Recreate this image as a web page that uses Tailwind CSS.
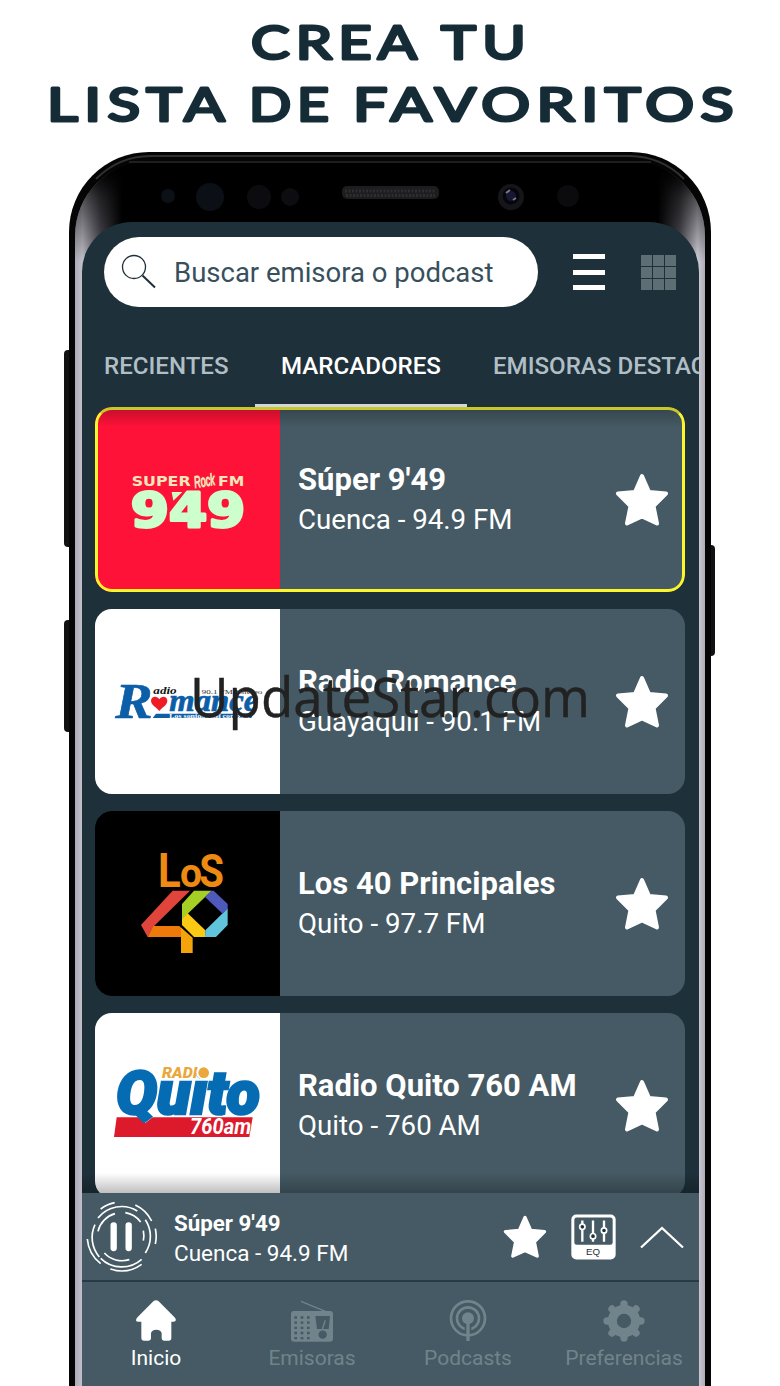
<!DOCTYPE html>
<html lang="es">
<head>
    <meta charset="UTF-8">
    <meta name="viewport" content="width=device-width, initial-scale=1.0">
    <title>Crea tu lista de favoritos</title>
    <script src="https://cdn.jsdelivr.net/npm/@tailwindcss/browser@4"></script>
</head>
<body class="bg-white font-['Roboto',sans-serif] overflow-hidden">
    <div class="relative w-[780px] h-[1386px] overflow-hidden">
        <!-- Heading -->
        <h1 class="h-[152px]">
            <svg class="block" width="780" height="152" font-family="Lato" font-weight="400" font-size="47" fill="#152c37" stroke="#152c37" stroke-width="3" stroke-linejoin="round" letter-spacing="5">
                <text x="251" y="58.500" textLength="172" lengthAdjust="spacingAndGlyphs">CREA</text>
                <text x="441" y="58.500" textLength="91" lengthAdjust="spacingAndGlyphs">TU</text>
                <text x="47" y="120.500" textLength="184" lengthAdjust="spacingAndGlyphs">LISTA</text>
                <text x="249" y="120.500" textLength="86" lengthAdjust="spacingAndGlyphs">DE</text>
                <text x="353" y="120.500" textLength="387" lengthAdjust="spacingAndGlyphs">FAVORITOS</text>
            </svg>
        </h1>

        <!-- Phone -->
        <div class="relative ml-[69px] w-[642px] h-[1234px]">
            <div class="absolute -left-[5px] top-[198px] w-2 h-[197px] rounded-l bg-[#111] border-r-2 border-[#444]"></div>
            <div class="absolute -left-[5px] top-[468px] w-2 h-[112px] rounded-l bg-[#111] border-r-2 border-[#444]"></div>
            <div class="absolute -right-[4px] top-[393px] w-2 h-[111px] rounded-r bg-[#111] border-l-2 border-[#333]"></div>

            <!-- Chassis, sensors, speaker, camera -->
            <svg class="absolute left-0 top-0" width="642" height="1234">
                <defs>
                    <linearGradient id="sides" gradientUnits="userSpaceOnUse" x1="6" y1="0" x2="636" y2="0">
                        <stop offset="0" stop-color="#aeacb6"/>
                        <stop offset=".012" stop-color="#c2c0ca"/>
                        <stop offset=".04" stop-color="#55535c"/>
                        <stop offset=".075" stop-color="#000"/>
                        <stop offset=".925" stop-color="#000"/>
                        <stop offset=".96" stop-color="#55535c"/>
                        <stop offset=".988" stop-color="#cfcdd7"/>
                        <stop offset="1" stop-color="#aeacb6"/>
                    </linearGradient>
                    <linearGradient id="shade" gradientUnits="userSpaceOnUse" x1="0" y1="18" x2="0" y2="110">
                        <stop offset="0" stop-color="#000"/>
                        <stop offset=".3" stop-color="#000" stop-opacity=".6"/>
                        <stop offset="1" stop-color="#000" stop-opacity="0"/>
                    </linearGradient>
                </defs>
                <path d="M0 1234V80A80 80 0 0 1 80 0H562A80 80 0 0 1 642 80V1234Z" fill="#050505"/>
                <path d="M6 1234V84A75 75 0 0 1 81 9H561A75 75 0 0 1 636 84V1234Z" fill="url(#sides)"/>
                <path d="M6 110V84A75 75 0 0 1 81 9H561A75 75 0 0 1 636 84V110Z" fill="url(#shade)"/>
                <path d="M27 27A78 78 0 0 1 81.500 4H560.500A78 78 0 0 1 615 27" fill="none" stroke="#303030" stroke-width="2"/>
                <path d="M60 10H582" stroke="#292929" stroke-width="1.500"/>
                <circle cx="99" cy="44" r="7" fill="#0c1117"/>
                <circle cx="141" cy="45" r="14" fill="#0a1016"/>
                <circle cx="190" cy="45" r="12" fill="#0c0c10"/>
                <circle cx="221" cy="45" r="9" fill="#0d0d11"/>
                <rect x="273" y="34" width="97" height="13" rx="5" fill="#1d1d1f"/>
                <path d="M276 39H367M277 43.500H366" stroke="#2e2e30" stroke-width="3" stroke-dasharray="2 1.500"/>
                <circle cx="442" cy="45" r="13" fill="#16161a"/>
                <circle cx="442" cy="44" r="8.500" fill="#05050c"/>
                <circle cx="442" cy="44" r="5" fill="#171733"/>
                <path d="M437 41l4-3M444 48l3-2" stroke="#777b88" stroke-width="2"/>
                <circle cx="499" cy="44" r="11" fill="#0b0b0d"/>
            </svg>

            <!-- Screen -->
            <div class="relative ml-[13px] top-[70px] w-[617px] h-[1164px] rounded-t-[50px] bg-[#1e3039] overflow-hidden flex flex-col">
                <div class="mt-[15px] ml-[22px] h-[70px] shrink-0 flex items-center">
                    <div class="w-[434px] h-full rounded-full bg-white flex items-center pl-[17px]">
                        <svg width="36" height="36" fill="none" stroke="#1e3039">
                            <circle cx="13" cy="13" r="11.500" stroke-width="1.300"/>
                            <path d="M21.500 21.500L34 33.500" stroke-width="2"/>
                        </svg>
                        <span class="ml-[17px] pt-[2px] text-[27.5px] text-[#37505c] whitespace-nowrap">Buscar emisora o podcast</span>
                    </div>
                    <div class="ml-[35px] w-8 h-9 flex flex-col justify-between">
                        <div class="h-[5px] bg-white"></div>
                        <div class="h-[5px] bg-white"></div>
                        <div class="h-[5px] bg-white"></div>
                    </div>
                    <div class="ml-[36px] w-[35px] h-[35px] grid grid-cols-3 gap-px">
                        <div class="bg-[#5d6e74]"></div><div class="bg-[#5d6e74]"></div><div class="bg-[#5d6e74]"></div>
                        <div class="bg-[#5d6e74]"></div><div class="bg-[#5d6e74]"></div><div class="bg-[#5d6e74]"></div>
                        <div class="bg-[#5d6e74]"></div><div class="bg-[#5d6e74]"></div><div class="bg-[#5d6e74]"></div>
                    </div>
                </div>

                <!-- Tabs -->
                <div class="h-[100px] shrink-0 flex text-[24.1px] font-medium whitespace-nowrap text-[#b0bec5]">
                    <div class="w-[173px] shrink-0 pl-[22px] pt-[19px] flex items-center">RECIENTES</div>
                    <div class="w-[212px] shrink-0 pt-[22px] border-b-[3px] border-[#cfd8dc] flex items-center justify-center text-white">MARCADORES</div>
                    <div class="shrink-0 pl-[26px] pt-[19px] flex items-center">EMISORAS DESTACADAS</div>
                </div>

                <!-- Stations -->
                <div class="relative flex-1 min-h-0 overflow-hidden pl-[13px] flex flex-col gap-[17px] text-white whitespace-nowrap">
                    <div class="relative w-[590px] h-[185px] shrink-0 rounded-[17px] bg-[#455a64] overflow-hidden flex items-center">
                        <svg width="185" height="185" viewBox="30 231 555 555">
                            <rect x="30" y="231" width="555" height="555" fill="#ff1238"/>
                            <g font-family="DejaVu Sans" font-weight="700" fill="#f2e6bd">
                                <text x="140" y="467" font-size="40" textLength="177" lengthAdjust="spacingAndGlyphs">SUPER</text>
                                <text x="330" y="474" font-size="50" font-family="Liberation Sans Narrow, Liberation Sans" font-style="italic" font-weight="400" textLength="62" lengthAdjust="spacingAndGlyphs" transform="rotate(-9 330 474)" stroke="#f2e6bd" stroke-width="3">Rock</text>
                                <text x="399" y="467" font-size="40" textLength="79" lengthAdjust="spacingAndGlyphs">FM</text>
                                <text x="137" y="590" font-size="142" fill="#ccffcb" stroke="#ccffcb" stroke-width="9" stroke-linejoin="round" textLength="344" lengthAdjust="spacingAndGlyphs">949</text>
                            </g>
                            <path d="M260 486h32l-27 26z" fill="#ccffcb"/>
                        </svg>
                        <div class="ml-[18px] flex-1">
                            <div class="text-[31px] leading-[40px] font-bold">Súper 9'49</div>
                            <div class="text-[27.7px] leading-[40px]">Cuenca - 94.9 FM</div>
                        </div>
                        <svg class="mr-[16px]" width="54" height="54" viewBox="0 0 54 54"><path d="M27 3L34 19L51 20.500L38.500 33L42 50.500L27 43.500L12 50.500L15.500 33L3 20.500L20 19Z" fill="#fff" stroke="#fff" stroke-width="4" stroke-linejoin="round"/></svg>
                        <div class="absolute inset-x-0 top-0 h-5 bg-gradient-to-b from-black/25 to-transparent"></div>
                        <div class="absolute inset-0 rounded-[17px] border-[3.5px] border-[#fbf52a] border-t-[#c8c72c]"></div>
                    </div>

                    <div class="w-[590px] h-[185px] shrink-0 rounded-[17px] bg-[#455a64] overflow-hidden flex items-center">
                        <svg width="185" height="185" viewBox="15 27 555 555">
                            <rect x="15" y="27" width="555" height="555" fill="#fff"/>
                            <g font-family="Liberation Serif" font-weight="700" font-style="italic" fill="#0c5ea8">
                                <text x="76" y="353" font-size="152" textLength="112" lengthAdjust="spacingAndGlyphs" stroke="#0c5ea8" stroke-width="2">R</text>
                                <text x="190" y="282" font-size="32" fill="#111" textLength="70" lengthAdjust="spacingAndGlyphs">adio</text>
                                <text x="238" y="333" font-size="92" textLength="267" lengthAdjust="spacingAndGlyphs" stroke="#0c5ea8" stroke-width="2">mance</text>
                                <text x="335" y="283" font-size="19" fill="#333" font-style="normal" font-weight="400" textLength="182" lengthAdjust="spacingAndGlyphs">90.1 FM Estéreo</text>
                                <path d="M198 341H490L484 354H188Z"/>
                                <text x="238" y="353" font-size="18" fill="#fff" font-style="normal" textLength="240" lengthAdjust="spacingAndGlyphs">Los sonidos del corazón</text>
                            </g>
                            <path d="M208 333C200 322 183 315 183 302C183 288 202 286 208 298C214 286 232 288 232 302C232 315 216 322 208 333Z" fill="#ee1c25"/>
                        </svg>
                        <div class="ml-[18px] flex-1">
                            <div class="text-[31px] leading-[40px] font-bold">Radio Romance</div>
                            <div class="text-[27.7px] leading-[40px]">Guayaquil - 90.1 FM</div>
                        </div>
                        <svg class="mr-[16px]" width="54" height="54" viewBox="0 0 54 54"><path d="M27 3L34 19L51 20.500L38.500 33L42 50.500L27 43.500L12 50.500L15.500 33L3 20.500L20 19Z" fill="#fff" stroke="#fff" stroke-width="4" stroke-linejoin="round"/></svg>
                    </div>

                    <div class="w-[590px] h-[185px] shrink-0 rounded-[17px] bg-[#455a64] overflow-hidden flex items-center">
                        <svg width="185" height="185" viewBox="15 33 555 555">
                            <rect x="15" y="33" width="555" height="555" fill="#000"/>
                            <g font-family="Roboto" font-weight="700" fill="#ee8a12">
                                <text x="204" y="262" font-size="143" textLength="68" lengthAdjust="spacingAndGlyphs">L</text>
                                <text x="270" y="261" font-size="124" textLength="66" lengthAdjust="spacingAndGlyphs">o</text>
                                <text x="328" y="261" font-size="138" textLength="74" lengthAdjust="spacingAndGlyphs">S</text>
                            </g>
                            <path d="M248 272H300L190 380L173 411L153 375Z" fill="#e0443a"/>
                            <path d="M190 378H268L273 384V411H173Z" fill="#ee7a0c"/>
                            <path d="M268 378L308 413V459H273V384Z" fill="#f5a30c"/>
                            <path d="M312 272H365L276 358V312Z" fill="#a5cf25"/>
                            <path d="M276 356L293 340L346 391L345 411H312L276 375Z" fill="#fbc814"/>
                            <path d="M413 325V375L378 411H345L346 391L398 340Z" fill="#5fc4dc"/>
                            <path d="M345 291L364 272H371L413 312V325L398 341Z" fill="#4f58bb"/>
                        </svg>
                        <div class="ml-[18px] flex-1">
                            <div class="text-[31px] leading-[40px] font-bold">Los 40 Principales</div>
                            <div class="text-[27.7px] leading-[40px]">Quito - 97.7 FM</div>
                        </div>
                        <svg class="mr-[16px]" width="54" height="54" viewBox="0 0 54 54"><path d="M27 3L34 19L51 20.500L38.500 33L42 50.500L27 43.500L12 50.500L15.500 33L3 20.500L20 19Z" fill="#fff" stroke="#fff" stroke-width="4" stroke-linejoin="round"/></svg>
                    </div>

                    <div class="w-[590px] h-[185px] shrink-0 rounded-[17px] bg-[#455a64] overflow-hidden flex items-center">
                        <svg width="185" height="185" viewBox="15 24 555 555">
                            <rect x="15" y="24" width="555" height="555" fill="#fff"/>
                            <path d="M80 337H488L478 396H72Z" fill="#dc1a2b"/>
                            <path d="M145 335L166 354L190 335Z" fill="#fff"/>
                            <g font-family="Roboto" font-weight="900" font-style="italic">
                                <text x="78" y="328" font-size="182" fill="#056cb4" stroke="#056cb4" stroke-width="8" textLength="432" lengthAdjust="spacingAndGlyphs">Quito</text>
                                <text x="216" y="220" font-size="42" fill="#eba63c" textLength="106" lengthAdjust="spacingAndGlyphs">RADI</text>
                                <text x="300" y="387" font-size="66" font-weight="700" fill="#fff" textLength="184" lengthAdjust="spacingAndGlyphs">760am</text>
                            </g>
                            <circle cx="341" cy="203" r="22" fill="#fff"/>
                            <circle cx="341" cy="203" r="16" fill="#eba63c"/>
                        </svg>
                        <div class="ml-[18px] flex-1">
                            <div class="text-[31px] leading-[40px] font-bold">Radio Quito 760 AM</div>
                            <div class="text-[27.7px] leading-[40px]">Quito - 760 AM</div>
                        </div>
                        <svg class="mr-[16px]" width="54" height="54" viewBox="0 0 54 54"><path d="M27 3L34 19L51 20.500L38.500 33L42 50.500L27 43.500L12 50.500L15.500 33L3 20.500L20 19Z" fill="#fff" stroke="#fff" stroke-width="4" stroke-linejoin="round"/></svg>
                    </div>
                    <div class="absolute inset-x-0 bottom-0 h-5 bg-gradient-to-t from-black/25 to-transparent"></div>
                </div>

                <!-- Player -->
                <div class="h-[89px] shrink-0 bg-[#455a64] border-b-2 border-[#263b45] flex items-center pl-[4px] text-white whitespace-nowrap">
                    <svg width="72" height="72" viewBox="48 49 216 216" fill="none" stroke="#fff" stroke-width="5">
                        <path d="M131 122V190M176 122V190" stroke-width="19" stroke-linecap="round"/>
                        <path d="M84 140A73 73 0 0 1 135 87M166 84A73 73 0 0 1 212 112M220 138A73 73 0 0 1 220 168M178 225A73 73 0 0 1 103 205"/>
                        <path d="M84 100A90 90 0 0 1 202 79M226 105A90 90 0 0 1 226 205M215 224A90 90 0 0 1 92 221M88 217A90 90 0 0 1 75 120"/>
                        <path d="M92 73A104 104 0 0 1 134 54M196 61A104 104 0 0 1 245 109M256 132A104 104 0 0 1 256 178M215 239A104 104 0 0 1 121 253M92 237A104 104 0 0 1 52 163"/>
                    </svg>
                    <div class="ml-[16px] pt-[3px] flex-1 text-[22.5px] leading-[30px]">
                        <div class="font-bold text-[22.3px]">Súper 9'49</div>
                        <div>Cuenca - 94.9 FM</div>
                    </div>
                    <svg width="44" height="44" viewBox="0 0 54 54"><path d="M27 3L34 19L51 20.500L38.500 33L42 50.500L27 43.500L12 50.500L15.500 33L3 20.500L20 19Z" fill="#fff" stroke="#fff" stroke-width="4" stroke-linejoin="round"/></svg>
                    <svg class="ml-[24px]" width="45" height="46" viewBox="514 87 135 137">
                        <rect x="515" y="88" width="133" height="135" rx="15" fill="#fff"/>
                        <rect x="524" y="97" width="115" height="82" rx="7" fill="#455a64"/>
                        <path d="M548 106V170M580 106V170M613 106V170" stroke="#fff" stroke-width="7"/>
                        <g fill="#1e3039" stroke="#fff" stroke-width="5"><circle cx="548" cy="125" r="8"/><circle cx="580" cy="153" r="8"/><circle cx="613" cy="136" r="8"/></g>
                        <text x="559" y="211" font-family="Liberation Sans" font-size="28" fill="#1e3039" textLength="42" lengthAdjust="spacingAndGlyphs">EQ</text>
                    </svg>
                    <svg class="ml-[23px] mr-[14px]" width="46" height="24" fill="none" stroke="#fff" stroke-width="2.300"><path d="M2 22.500L23 3L44 22.500"/></svg>
                </div>

                <!-- Bottom navigation -->
                <div class="-ml-1 -mr-[3px] h-[104px] shrink-0 bg-[#455a64] text-[#71838b] text-[21px] leading-[24px] grid grid-cols-4 text-center">
                    <div class="pt-[18px] flex flex-col items-center gap-[4px] text-white">
                        <svg width="42" height="42" viewBox="196 343 124 126" fill="#fff"><path d="M250 347Q258 341 266 347L315 396Q322 408 310 408H304V458Q304 465 296 465H282Q275 465 275 458V443Q273 432 259 432Q245 432 243 443V458Q243 465 236 465H221Q214 465 214 458V408H206Q193 408 201 396Z"/></svg>
                        <span>Inicio</span>
                    </div>
                    <div class="pt-[18px] flex flex-col items-center gap-[4px]">
                        <svg width="42" height="42" viewBox="663 343 126 126">
                            <path d="M693 347L768 378" stroke="#71838b" stroke-width="4"/>
                            <rect x="663" y="376" width="126" height="92" rx="9" fill="#71838b"/>
                            <path d="M677 392V462M696 392V462M715 392V462" stroke="#455a64" stroke-width="8" stroke-dasharray="7 8.500"/>
                            <path d="M736 391H780L776 430H741Z" fill="#455a64"/>
                            <path d="M757 430L766 404" stroke="#71838b" stroke-width="4"/>
                            <circle cx="758" cy="447" r="15" fill="#455a64" stroke="#71838b" stroke-width="5"/>
                        </svg>
                        <span>Emisoras</span>
                    </div>
                    <div class="pt-[18px] flex flex-col items-center gap-[4px]">
                        <svg width="42" height="42" viewBox="141 342 126 126" fill="none" stroke="#71838b">
                            <circle cx="204" cy="397" r="51" stroke-width="8"/>
                            <circle cx="204" cy="397" r="33" stroke-width="8"/>
                            <path d="M204 400V440" stroke-width="20" stroke="#455a64"/>
                            <path d="M204 400V465" stroke-width="10"/>
                            <circle cx="204" cy="397" r="18" fill="#71838b" stroke="none"/>
                        </svg>
                        <span>Podcasts</span>
                    </div>
                    <div class="pt-[18px] flex flex-col items-center gap-[4px]">
                        <svg width="42" height="42" viewBox="-63 -63 126 126" stroke="#71838b">
                            <circle r="35" fill="none" stroke-width="27"/>
                            <path d="M0-44V-51M0 44V51M-44 0H-51M44 0H51M31-31L36-36M-31 31L-36 36M31 31L36 36M-31-31L-36-36" stroke-width="22" stroke-linecap="round"/>
                        </svg>
                        <span>Preferencias</span>
                    </div>
                </div>
            </div>
        </div>

        <!-- Watermark -->
        <svg class="absolute left-0 top-[660px]" width="780" height="80">
            <text x="190" y="56.500" font-family="Open Sans" font-size="55" fill="#222" stroke="#222" stroke-width=".4" textLength="400" lengthAdjust="spacingAndGlyphs">UpdateStar.com</text>
        </svg>
    </div>
</body>
</html>
